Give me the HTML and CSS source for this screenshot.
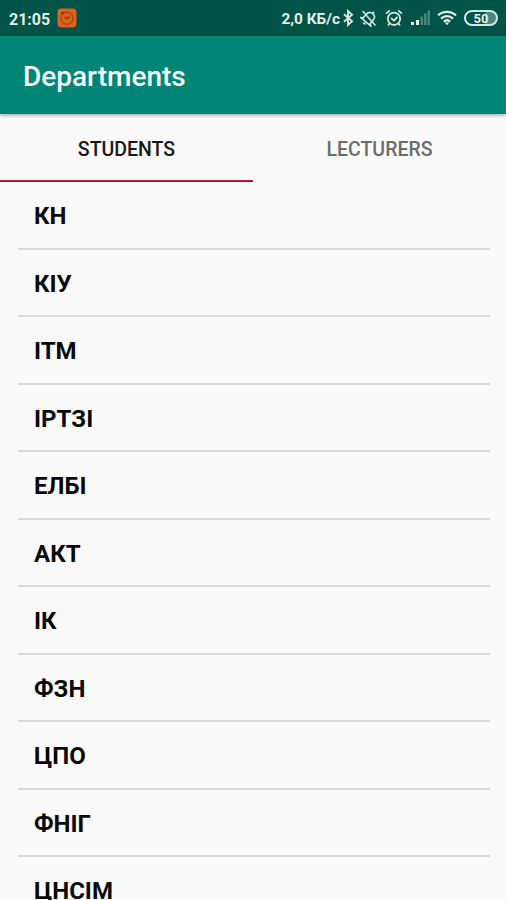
FILE: index.html
```html
<!DOCTYPE html>
<html lang="uk">
<head>
    <meta charset="UTF-8">
    <meta name="viewport" content="width=device-width, initial-scale=1.0">
    <title>Departments</title>
    <link rel="stylesheet" href="styles.css">
</head>
<body>

    <div class="status-bar">
        <span class="clock">21:05</span>
        <svg class="app-icon" width="20" height="20" viewBox="0 0 20 20">
            <rect x="0.5" y="0.5" width="19" height="19" rx="4" fill="#e4611b"/>
            <circle cx="10" cy="10.3" r="6" fill="none" stroke="#a9471a" stroke-width="1.4"/>
            <path d="M7 9.3h6M8 11h4" stroke="#8c401b" stroke-width="1.2"/>
            <circle cx="5.5" cy="5" r="1.3" fill="#70351a"/>
        </svg>
        <span class="speed">2,0 КБ/с</span>
        <svg class="bluetooth" width="12" height="18" viewBox="0 0 12 18">
            <path d="M2 5.2L10 12.3L6 16V2L10 5.7L2 12.8" fill="none" stroke="#d5e5e1" stroke-width="1.9"/>
        </svg>
        <svg class="mute" width="18" height="18" viewBox="0 0 18 18" fill="none" stroke="#d5e5e1" stroke-width="1.6">
            <g transform="rotate(40 9 9)">
                <path d="M4.5 12.5V8C4.500 5 6.500 3.200 9 3.200S13.500 5 13.500 8v4.500l2 1.500H2.500zM7.500 16.200h3M9 1v2"/>
            </g>
            <path d="M2.5 2L15.500 16.500"/>
        </svg>
        <svg class="alarm" width="18" height="18" viewBox="0 0 18 18" fill="none" stroke="#d5e5e1" stroke-width="1.8">
            <circle cx="9" cy="9.8" r="6.2"/>
            <path d="M1 4.6L4.8 1.5M17 4.6L13.2 1.5M6 9l3 2.6L12.5 8M4.5 14.5L3 16.5M13.5 14.5l1.5 2"/>
        </svg>
        <svg class="signal" width="19" height="16" viewBox="0 0 19 16">
            <path d="M0 12h3v3H0zM5 10h3v5H5z" fill="#e3eeeb"/>
            <path d="M9.5 6.5H12V15H9.5zM13 3.5h2.5V15H13zM16.5 0.5H19V15h-2.5z" fill="#48877b"/>
        </svg>
        <svg class="wifi" width="20" height="16" viewBox="0 0 20 16" fill="none" stroke="#e3eeeb" stroke-width="2.3">
            <path d="M1 5.3C6 0.6 14 0.6 19 5.3M4 8.6C7.5 5.4 12.5 5.4 16 8.6M6.8 11.6C8.8 9.9 11.2 9.9 13.2 11.6"/>
            <path d="M7.8 12.6h4.4L10 15.3z" fill="#e3eeeb" stroke="none"/>
        </svg>
        <span class="battery">50</span>
    </div>

    <div class="app-bar">Departments</div>

    <div class="tabs">
        <div class="tab active">STUDENTS</div>
        <div class="tab">LECTURERS</div>
    </div>

    <ul class="departments">
        <li>КН</li>
        <li>КІУ</li>
        <li>ІТМ</li>
        <li>ІРТЗІ</li>
        <li>ЕЛБІ</li>
        <li>АКТ</li>
        <li>ІК</li>
        <li>ФЗН</li>
        <li>ЦПО</li>
        <li>ФНІГ</li>
        <li>ЦНСІМ</li>
    </ul>

</body>
</html>
```

FILE: styles.css
```css
body {
    margin: 0;
    height: 900px;
    overflow: hidden;
    display: flex;
    flex-direction: column;
    background-color: #fafafa;
    font-family: Roboto, "Liberation Sans", sans-serif;
}
.status-bar {
    flex: none;
    display: flex;
    align-items: center;
    height: 36px;
    padding: 0 8px 0 9px;
    box-sizing: border-box;
    background-color: #005347;
    color: #e3eeeb;
    font-size: 16px;
    font-weight: bold;
    white-space: nowrap;
}
.status-bar svg {
    flex: none;
}
.clock {
    padding-top: 2px;
}
.app-icon {
    margin-left: 7px;
}
.speed {
    margin-left: auto;
    padding-top: 2px;
    font-size: 15.4px;
}
.bluetooth {
    margin-left: 2px;
}
.mute {
    margin-left: 6px;
}
.alarm {
    margin-left: 7px;
}
.signal {
    margin-left: 8px;
}
.wifi {
    margin-left: 7px;
}
.battery {
    width: 34px;
    height: 16px;
    margin-left: 7px;
    box-sizing: border-box;
    border: 2px solid #d5e5e1;
    border-radius: 8px;
    background: linear-gradient(to right, #005347 62%, #48877b 62%);
    font-size: 13px;
    line-height: 13px;
    text-align: center;
}
.app-bar {
    flex: none;
    height: 78px;
    padding-left: 23px;
    background-color: #008577;
    color: #f4fbfa;
    box-shadow: 0 1px 4px rgba(0, 0, 0, 0.4);
    font-size: 28px;
    font-weight: 500;
    line-height: 82px;
}
.tabs {
    flex: none;
    display: flex;
    height: 68px;
}
.tab {
    flex: 1;
    box-sizing: border-box;
    border-bottom: 2px solid transparent;
    color: #6c6c6c;
    font-size: 19.5px;
    font-weight: 500;
    line-height: 72px;
    text-align: center;
}
.tab.active {
    border-bottom-color: #c8102e;
    color: #181818;
}
.departments {
    list-style: none;
    margin: 0;
    padding: 0 16px 0 18px;
}
.departments li {
    height: 67.5px;
    padding-left: 16px;
    box-sizing: border-box;
    border-bottom: 2px solid #dadada;
    color: #080808;
    font-size: 24px;
    font-weight: bold;
    line-height: 69px;
}
```
